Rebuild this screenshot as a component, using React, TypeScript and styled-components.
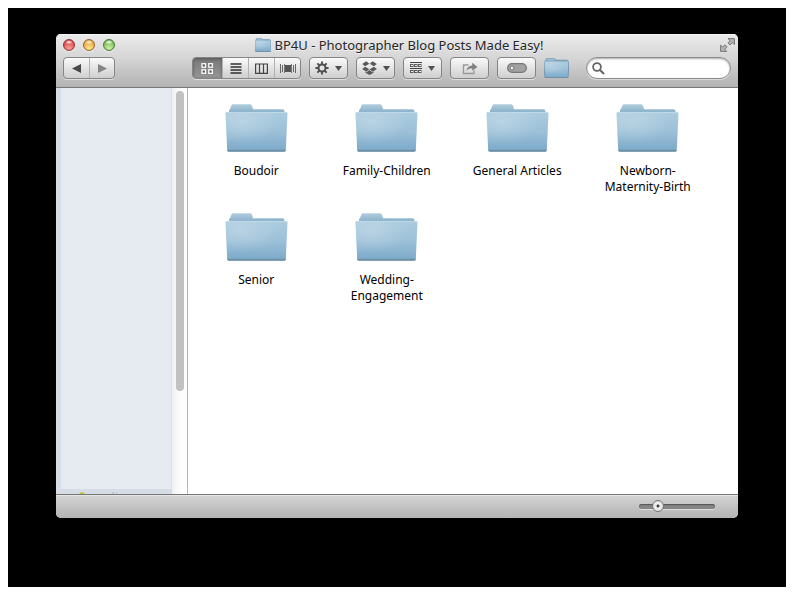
import React, { useState } from "react";
import styled, { createGlobalStyle, css } from "styled-components";

const GlobalStyle = createGlobalStyle`
  * { box-sizing: border-box; }
  body { margin: 0; background: #fff; font-family: "Noto Sans", "Open Sans", sans-serif; color: #000; }
  button, input { font: inherit; }
`;

const Page = styled.div`
  min-height: 100vh;
  padding: 8px;
  display: flex;
`;
const Desktop = styled.div`
  flex: 1;
  min-width: 0;
  display: flex;
  padding: 26px 48px 69px;
  background: #000;
`;
const FinderWindow = styled.main`
  flex: 1;
  min-width: 0;
  display: flex;
  flex-direction: column;
  border-radius: 5px;
  overflow: hidden;
  background: #fff;
`;
const Header = styled.header`
  background: linear-gradient(#ebebeb, #d6d6d6 45%, #b2b2b2);
  border-bottom: 1px solid #787878;
  box-shadow: inset 0 1px #f6f6f6;
  padding-bottom: 8px;
`;
const TitleBar = styled.div`
  display: grid;
  grid-template-columns: 1fr auto 1fr;
  align-items: center;
  height: 22px;
  padding: 0 3px 0 7px;
`;
const Lights = styled.div`
  display: flex;
  gap: 8px;
`;
const Light = styled.button<{ $dark: string; $mid: string; $glow: string }>`
  width: 12px;
  height: 12px;
  padding: 0;
  border-radius: 50%;
  border: 1px solid ${(p) => p.$dark};
  background:
    radial-gradient(ellipse 4px 2px at 50% 22%, #fff, transparent),
    radial-gradient(circle at 50% 85%, ${(p) => p.$glow}, ${(p) => p.$mid} 75%);
  box-shadow: 0 1px #f2f2f2;
`;
const Title = styled.h1`
  display: flex;
  align-items: center;
  gap: 4px;
  margin: 0;
  font-size: 13px;
  font-weight: 400;
  line-height: 20px;
  color: #262626;
  text-shadow: 0 1px #f2f2f2;
  white-space: nowrap;
`;
const BareButton = styled.button`
  display: flex;
  padding: 0;
  border: 0;
  background: none;
`;
const FullScreen = styled(BareButton)`
  justify-self: end;
`;
const Toolbar = styled.div`
  display: flex;
  align-items: center;
  gap: 8px;
  padding: 1px 7px 0;
`;
const face = css`
  border: 1px solid #858585;
  border-radius: 4px;
  background: linear-gradient(#fafafa, #e4e4e4 50%, #cfcfcf);
  box-shadow: 0 1px #dedede;
`;
const Segments = styled.div<{ $first?: boolean }>`
  ${face}
  display: flex;
  height: 22px;
  overflow: hidden;
  flex: none;
  margin-right: ${(p) => (p.$first ? "69px" : "0")};
`;
const Segment = styled.button<{ $on?: boolean; $width?: number }>`
  display: flex;
  align-items: center;
  justify-content: center;
  width: ${(p) => p.$width ?? 26}px;
  padding: 0;
  border: 0;
  background: ${(p) => (p.$on ? "linear-gradient(#777, #969696)" : "none")};
  box-shadow: ${(p) => (p.$on ? "inset 0 1px 3px #555" : "none")};
  & + & { border-left: 1px solid #b2b2b2; }
`;
const ToolButton = styled.button`
  ${face}
  display: flex;
  align-items: center;
  justify-content: center;
  gap: 6px;
  flex: none;
  width: 39px;
  height: 22px;
  padding: 0;
`;
const SearchBox = styled.label`
  display: flex;
  align-items: center;
  gap: 4px;
  flex: 1;
  min-width: 60px;
  height: 22px;
  margin-left: 9px;
  padding: 0 5px;
  border: 1px solid #8c8c8c;
  border-radius: 11px;
  background: #fff;
  box-shadow: inset 0 1px 2px #aaa, 0 1px #dadada;
`;
const SearchInput = styled.input`
  flex: 1;
  width: 0;
  min-width: 0;
  border: 0;
  outline: 0;
  padding: 0;
  background: none;
  font-size: 12px;
`;
const Body = styled.div`
  flex: 1;
  display: flex;
`;
const Sidebar = styled.aside`
  display: flex;
  width: 132px;
  flex: none;
  border-right: 1px solid #b5b5b5;
`;
const SourceList = styled.div`
  flex: 1;
  display: flex;
  flex-direction: column;
  padding-left: 5px;
  background: #d6dde6;
`;
const SourceArea = styled.div`
  flex: 1;
  background: #e6ebf1;
  border-right: 1px solid #dde2e9;
`;
const SourceEdge = styled.svg`
  display: block;
  width: 60px;
  height: 5px;
`;
const ScrollTrack = styled.div`
  width: 15px;
  padding: 3px 3px 0 4px;
  background: linear-gradient(90deg, #efefef, #fafafa 40%, #fff);
`;
const ScrollThumb = styled.div`
  height: 300px;
  border-radius: 4px;
  background: #c1c1c1;
`;
const Files = styled.section`
  flex: 1;
  display: grid;
  grid-template-columns: repeat(4, 1fr);
  grid-auto-rows: 109px;
  align-content: start;
  padding: 16px 25px 0 3px;
`;
const FileItem = styled.button`
  display: flex;
  flex-direction: column;
  align-items: center;
  gap: 11px;
  padding: 0;
  border: 0;
  background: none;
  color: #000;
`;
const FileName = styled.span`
  max-width: 100px;
  font-size: 12px;
  line-height: 16px;
  text-align: center;
`;
const Footer = styled.footer`
  display: flex;
  align-items: center;
  justify-content: flex-end;
  height: 24px;
  padding-right: 23px;
  border-top: 1px solid #777;
  background: linear-gradient(#d4d4d4, #b3b3b3);
  box-shadow: inset 0 1px #e6e6e6;
`;
const SizeSlider = styled.input`
  appearance: none;
  width: 76px;
  height: 12px;
  margin: 0;
  background: none;
  &::-webkit-slider-runnable-track {
    height: 5px;
    border-radius: 3px;
    background: #858585;
    box-shadow: inset 0 1px 1px #555, 0 1px #ddd;
  }
  &::-webkit-slider-thumb {
    appearance: none;
    width: 12px;
    height: 12px;
    margin-top: -4px;
    border: 1px solid #777;
    border-radius: 50%;
    background: radial-gradient(circle, #444 0 1px, #f4f4f4 2px, #dcdcdc 5px);
  }
`;

function Folder({ id, width, height }: { id: string; width: number; height: number }) {
  const outline = width < 40 ? "#658faa" : "none";
  return (
    <svg width={width} height={height} viewBox="0 0 63 48" preserveAspectRatio="none" aria-hidden="true">
      <defs>
        <linearGradient id={`${id}-front`} x1="0" y1="0" x2="0" y2="1">
          <stop offset="0" stopColor="#acccdf" />
          <stop offset="0.5" stopColor="#9cc0d8" />
          <stop offset="1" stopColor="#7aa9c9" />
        </linearGradient>
        <linearGradient id={`${id}-back`} x1="0" y1="0" x2="0" y2="1">
          <stop offset="0" stopColor="#b0cddd" />
          <stop offset="0.5" stopColor="#93b8cf" />
          <stop offset="1" stopColor="#82abc5" />
        </linearGradient>
        <radialGradient id={`${id}-light`} cx="0.25" cy="0.25" r="0.6">
          <stop offset="0" stopColor="#cce0ea" stopOpacity="0.5" />
          <stop offset="1" stopColor="#cce0ea" stopOpacity="0" />
        </radialGradient>
      </defs>
      <path d="M4 12V6.5Q4 5.500 5 5L6.500 1.200Q7 .3 8 .3H25Q26.300 .3 26.800 1.500L28.200 5.300H57.500Q59.500 5.300 59.500 7.500V12Z" fill={`url(#${id}-back)`} stroke={outline} strokeWidth="2" />
      <path d="M.5 9.500Q.3 8 2 8H61Q62.700 8 62.500 9.500L60.800 46Q60.700 47.500 59.300 47.500H3.700Q2.300 47.500 2.200 46Z" fill={`url(#${id}-front)`} stroke={outline} strokeWidth="2" />
      <path d="M.5 9.500Q.3 8 2 8H61Q62.700 8 62.500 9.500L60.800 46H2.200Z" fill={`url(#${id}-light)`} />
      <path d="M1 8.500H62" stroke="#c0d9e7" strokeWidth="1" />
      <path d="M2.200 45.800H60.800Q60.700 47.700 59.300 47.700H3.700Q2.300 47.700 2.200 45.800Z" fill="#6f8fa4" />
    </svg>
  );
}

const Caret = () => (
  <svg width="7" height="5" viewBox="0 0 7 5" aria-hidden="true"><path d="M0 0H7L3.500 5Z" fill="#505050" /></svg>
);
const Triangle = ({ back }: { back?: boolean }) => (
  <svg width="9" height="9" viewBox="0 0 9 9" aria-hidden="true">
    <path d={back ? "M9 0V9L0 4.500Z" : "M0 0V9L9 4.500Z"} fill={back ? "#484848" : "#858585"} />
  </svg>
);
const GridIcon = () => (
  <svg width="13" height="11" viewBox="0 0 13 11" aria-hidden="true">
    <g fill="#555" stroke="#fff" strokeWidth="1.300">
      <rect x="1" y=".7" width="3.500" height="3.500" /><rect x="7.800" y=".7" width="3.500" height="3.500" />
      <rect x="1" y="6.800" width="3.500" height="3.500" /><rect x="7.800" y="6.800" width="3.500" height="3.500" />
    </g>
  </svg>
);
const ListIcon = () => (
  <svg width="12" height="11" viewBox="0 0 12 11" aria-hidden="true">
    <path d="M.5 1H11.500M.5 4H11.500M.5 7H11.500M.5 10H11.500" stroke="#303030" strokeWidth="1.400" />
  </svg>
);
const ColumnsIcon = () => (
  <svg width="13" height="11" viewBox="0 0 13 11" aria-hidden="true">
    <path d="M.6 1H12.400V10.400H.6ZM4.500 1V10M8.500 1V10" fill="none" stroke="#444" strokeWidth="1.200" />
  </svg>
);
const FlowIcon = () => (
  <svg width="16" height="11" viewBox="0 0 16 11" aria-hidden="true">
    <path d="M.5 1V10M2.500 2V9M13.500 2V9M15.500 1V10" stroke="#666" />
    <rect x="4" y="2" width="8" height="7" fill="#555" />
    <path d="M4.500 1V10M11.500 1V10" stroke="#777" />
  </svg>
);
const GearIcon = () => (
  <svg width="14" height="14" viewBox="-7 -7 14 14" aria-hidden="true">
    <g stroke="#505050" strokeWidth="1.900">
      {[0, 45, 90, 135].map((a) => <path key={a} d="M-6.600 0H-3.500M3.500 0H6.600" transform={`rotate(${a})`} />)}
    </g>
    <circle r="3.500" fill="none" stroke="#505050" strokeWidth="2" />
  </svg>
);
const BoxIcon = () => (
  <svg width="15" height="14" viewBox="0 0 15 14" aria-hidden="true">
    <g fill="#585858">
      <path d="M4.300 .3L7.300 2.700L3.100 5.300L.2 3Z" /><path d="M10.700 .3L14.800 3L11.900 5.300L7.700 2.700Z" />
      <path d="M3.100 5.700L7.300 8.300L4.300 10.700L.2 8Z" /><path d="M11.900 5.700L14.800 8L10.700 10.700L7.700 8.300Z" />
      <path d="M3.300 10.800L4.400 11.600L7.500 9.100L10.600 11.600L11.700 10.800V11.700L7.500 14L3.300 11.700Z" />
    </g>
  </svg>
);
const ArrangeIcon = () => (
  <svg width="12" height="12" viewBox="0 0 12 12" aria-hidden="true">
    <path d="M0 .5H12M0 6.500H12" stroke="#444" />
    <g fill="#e8e8e8" stroke="#5a5a5a">
      {[0.5, 4.5, 8.5].map((x) => <g key={x}><rect x={x} y="2.500" width="2.500" height="2" /><rect x={x} y="8.500" width="2.500" height="2" /></g>)}
    </g>
  </svg>
);
const ShareIcon = () => (
  <svg width="16" height="13" viewBox="0 0 16 13" aria-hidden="true">
    <path d="M6.500 3H1.500V11.500H12V8.500" fill="none" stroke="#999" strokeWidth="1.400" />
    <path d="M4.500 9C5 5.300 7 3.600 10.200 3.500V.7L15.500 5L10.200 8.800V6.200C7.600 6.200 6 6.900 4.500 9Z" fill="#808080" />
  </svg>
);
const TagIcon = () => (
  <svg width="20" height="10" viewBox="0 0 20 10" aria-hidden="true">
    <rect x=".6" y=".6" width="18.800" height="8.800" rx="4.400" fill="#a2a2a2" stroke="#777" strokeWidth="1.200" />
    <circle cx="5" cy="5" r="2" fill="#eee" stroke="#777" />
  </svg>
);
const SearchIcon = () => (
  <svg width="13" height="13" viewBox="0 0 13 13" aria-hidden="true">
    <circle cx="5" cy="5" r="3.900" fill="none" stroke="#656565" strokeWidth="1.800" />
    <path d="M8 8L12 12" stroke="#656565" strokeWidth="2.200" />
  </svg>
);
const ExpandIcon = () => (
  <svg width="15" height="14" viewBox="0 0 15 14" aria-hidden="true">
    <g fill="#b4b4b4" stroke="#777" strokeLinejoin="miter">
      <path d="M8 .6H14.400V6.500L12.300 4.700L10 7L7.900 5L10.200 2.700Z" />
      <path d="M.6 7.200L2.700 9L5 6.800L7 8.800L4.700 11.200L6.700 13.400H.6Z" />
    </g>
  </svg>
);

const folders = ["Boudoir", "Family-Children", "General Articles", "Newborn-Maternity-Birth", "Senior", "Wedding-Engagement"];
const views = [
  { name: "Icon view", Icon: GridIcon, width: 29 },
  { name: "List view", Icon: ListIcon },
  { name: "Column view", Icon: ColumnsIcon },
  { name: "Cover Flow view", Icon: FlowIcon },
];

export default function App() {
  const [view, setView] = useState(0);
  return (
    <Page>
      <GlobalStyle />
      <Desktop>
        <FinderWindow>
          <Header>
            <TitleBar>
              <Lights>
                <Light aria-label="Close" $dark="#8d3433" $mid="#dc4547" $glow="#ff9e9a" />
                <Light aria-label="Minimize" $dark="#966026" $mid="#e9a33e" $glow="#ffe98c" />
                <Light aria-label="Zoom" $dark="#4a7535" $mid="#77b957" $glow="#ccf3a0" />
              </Lights>
              <Title><Folder id="title" width={16} height={14} />BP4U - Photographer Blog Posts Made Easy!</Title>
              <FullScreen aria-label="Enter full screen"><ExpandIcon /></FullScreen>
            </TitleBar>
            <Toolbar>
              <Segments $first>
                <Segment aria-label="Back" $width={25}><Triangle back /></Segment>
                <Segment aria-label="Forward" $width={25}><Triangle /></Segment>
              </Segments>
              <Segments>
                {views.map(({ name, Icon, width }, i) => (
                  <Segment key={name} aria-label={name} aria-pressed={view === i} $on={view === i} $width={width} onClick={() => setView(i)}><Icon /></Segment>
                ))}
              </Segments>
              <ToolButton aria-label="Actions"><GearIcon /><Caret /></ToolButton>
              <ToolButton aria-label="Dropbox"><BoxIcon /><Caret /></ToolButton>
              <ToolButton aria-label="Arrange"><ArrangeIcon /><Caret /></ToolButton>
              <ToolButton aria-label="Share"><ShareIcon /></ToolButton>
              <ToolButton aria-label="Labels"><TagIcon /></ToolButton>
              <BareButton aria-label="Folder shortcut"><Folder id="shortcut" width={25} height={20} /></BareButton>
              <SearchBox><SearchIcon /><SearchInput type="text" aria-label="Search" /></SearchBox>
            </Toolbar>
          </Header>
          <Body>
            <Sidebar>
              <SourceList>
                <SourceArea />
                <SourceEdge viewBox="0 0 60 5" aria-hidden="true">
                  <path d="M18 5Q21 1 24 5Z" fill="#c5c53c" />
                  <path d="M51 4H53M55 4H56" stroke="#a9afb9" />
                </SourceEdge>
              </SourceList>
              <ScrollTrack><ScrollThumb /></ScrollTrack>
            </Sidebar>
            <Files>
              {folders.map((name, i) => (
                <FileItem key={name}>
                  <Folder id={`folder-${i}`} width={63} height={48} />
                  <FileName>{name}</FileName>
                </FileItem>
              ))}
            </Files>
          </Body>
          <Footer>
            <SizeSlider type="range" aria-label="Icon size" min={0} max={100} defaultValue={20} />
          </Footer>
        </FinderWindow>
      </Desktop>
    </Page>
  );
}
